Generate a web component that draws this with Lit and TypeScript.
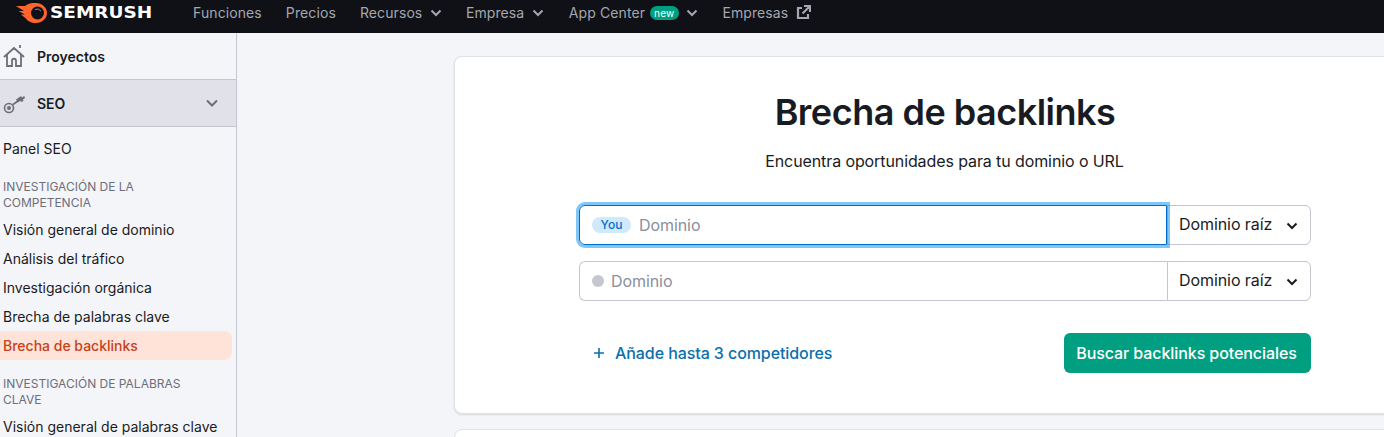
import { LitElement, html, css } from "lit";
import { customElement } from "lit/decorators.js";

const chev = (c: string) => html`<svg class="chev" width="12" height="8" viewBox="0 0 12 8" fill="none"><path d="M1.500 1.500 6 6l4.500-4.500" stroke=${c} stroke-width="2" /></svg>`;

@customElement("app-root")
export class AppRoot extends LitElement {
  static styles = css`
    :host { display: block; width: 1384px; height: 437px; overflow: hidden; background: #f4f5f9; font-family: Inter, "Liberation Sans", sans-serif; color: #191b23; }
    .top { height: 33px; background: #101116; display: flex; align-items: center; padding-bottom: 8px; box-sizing: border-box; color: #a4a6b0; font-size: 14px; letter-spacing: .1px; }
    .logo { display: flex; align-items: center; width: 193px; padding-left: 16px; box-sizing: border-box; gap: 2px; flex: none; }
    .logotext { display: inline-block; font-family: "DejaVu Sans", sans-serif; font-weight: 700; font-size: 15.5px; color: #fff; letter-spacing: 0; transform: scaleX(1.19); transform-origin: left center; }
    .nav { display: flex; align-items: center; gap: 24px; }
    .nav span.i { display: flex; align-items: center; gap: 7.5px; }
    .nav span.app { margin-left: 1px; }
    .new { background: #009f81; color: #fff; font-size: 10px; line-height: 14px; border-radius: 7px; padding: 0 4.5px; height: 14px; margin-left: -3px; letter-spacing: .2px; }
    .body { display: flex; height: 404px; }
    .side { width: 237px; flex: none; border-right: 1px solid #c4c7cf; box-sizing: border-box; overflow: hidden; }
    .h1 { display: flex; align-items: center; height: 47px; border-bottom: 1px solid #c4c7cf; box-sizing: border-box; font-size: 14px; font-weight: 600; padding-left: 37px; position: relative; }
    .h1 svg.ic { position: absolute; left: 3px; top: 10px; }
    .h1.seo { background: #e0e1e9; height: 47px; justify-content: space-between; padding-right: 18px; }
    .items { padding-top: 7px; padding-right: 4px; font-size: 14px; line-height: 29px; }
    .it { padding-left: 3px; height: 29px; color: #191b23; white-space: nowrap; }
    .it.first { margin-bottom: 16px; }
    .it.sel { background: #ffe3d8; color: #c4421c; border-radius: 0 8px 8px 0; font-weight: 500; }
    .cap { padding-left: 3px; padding-right: 30px; font-size: 12px; line-height: 16px; color: #6c6e79; margin-bottom: 4px; }
    .cap.second { margin-top: 16px; }
    .main { flex: 1; padding: 23px 0 0 217px; overflow: hidden; }
    .card { width: 982px; height: 358px; box-sizing: border-box; background: #fff; border-radius: 8px; border: 1px solid #e0e1e9; box-shadow: 0 1px 2px rgba(25,27,35,.12); display: flex; flex-direction: column; align-items: center; }
    .card2 { width: 982px; height: 30px; background: #fff; border-radius: 8px; border: 1px solid #e0e1e9; margin-top: 15px; box-sizing: border-box; }
    h1 { margin: 33px 0 0; font-size: 36px; line-height: 44px; font-weight: 600; letter-spacing: -.5px; }
    .sub { font-size: 16px; line-height: 24px; margin-top: 15px; letter-spacing: -.1px; margin-left: -1px; }
    .form { width: 732px; margin-top: 32px; letter-spacing: -.08px; }
    .row { display: flex; height: 40px; margin-bottom: 16px; font-size: 16px; }
    .inp { flex: 1; display: flex; align-items: center; border: 1px solid #c4c7cf; border-right: none; border-radius: 6px 0 0 6px; box-sizing: border-box; padding-left: 12px; color: #8a8e9b; gap: 8px; }
    .inp.focus { border: 1px solid #006dca; box-shadow: 0 0 0 3px rgba(0,143,248,.5); position: relative; z-index: 1; border-radius: 6px 0 0 6px; }
    .dot { width: 12px; height: 12px; border-radius: 50%; background: #c4c7cf; margin-right: -1px; }
    .you { background: #d0e9fc; color: #006dca; font-size: 12px; line-height: 16px; border-radius: 8px; height: 16px; width: 39px; text-align: center; font-weight: 500; letter-spacing: 0; }
    .sel-box { width: 144px; flex: none; border: 1px solid #c4c7cf; border-radius: 0 6px 6px 0; box-sizing: border-box; display: flex; align-items: center; justify-content: space-between; padding: 0 12px 2px 11px; color: #191b23; }
    .sel-box .chev { margin-top: 4px; }
    .actions { display: flex; justify-content: space-between; align-items: center; margin-top: 32px; }
    .add { display: flex; align-items: center; color: #0b6fae; font-weight: 500; padding-left: 14px; gap: 10px; font-size: 16px; }
    .btn { background: #009f81; color: #fff; border-radius: 6px; height: 40px; width: 247px; box-sizing: border-box; padding-right: 2px; display: flex; align-items: center; justify-content: center; font-size: 16px; font-weight: 500; }
  `;

  render() {
    return html`
      <div class="top">
        <div class="logo">
          <svg width="32" height="22" viewBox="0 0 32 22">
            <path d="M0 4h9C12 1.500 15.500 1 20 1c6 0 11 4.500 11 10s-5 10-11 10c-5 0-8-1.500-10.500-5C7.500 14.500 6 13.500 5 12.500h4L2.500 9H8z" fill="#ff642d"/>
            <circle cx="21.500" cy="11" r="6.500" fill="#101116"/>
            <path d="M19 7.500a5 5 0 0 1 6 1.500" fill="none" stroke="#8a8e9b" stroke-width="1"/>
          </svg>
          <span class="logotext">SEMRUSH</span>
        </div>
        <div class="nav">
          <span class="i">Funciones</span>
          <span class="i">Precios</span>
          <span class="i">Recursos ${chev("#a4a6b0")}</span>
          <span class="i">Empresa ${chev("#a4a6b0")}</span>
          <span class="i app">App Center <span class="new">new</span> ${chev("#a4a6b0")}</span>
          <span class="i">Empresas
            <svg width="15" height="15" viewBox="0 0 15 15" fill="none" stroke="#a4a6b0" stroke-width="2.200"><path d="M6 3H2v10h10V9M8 1h6v6M14 1 6.500 8.500"/></svg>
          </span>
        </div>
      </div>
      <div class="body">
        <div class="side">
          <div class="h1">
            <svg class="ic" width="24" height="26" viewBox="0 0 24 26" fill="none" stroke="#6c6e79" stroke-width="1.800">
              <path d="M1 14 11 5l10 9M4 12v11h5v-5c0-3 4-3 4 0v5h5V12M17 2v3"/>
            </svg>
            Proyectos
          </div>
          <div class="h1 seo">
            <svg class="ic" width="24" height="26" viewBox="0 0 24 26" fill="none" stroke="#6c6e79" stroke-width="1.600">
              <circle cx="6" cy="18" r="4.500"/><circle cx="6" cy="18" r="1.200" fill="#6c6e79"/>
              <path d="m10 14.500 5-3.500"/>
              <path d="m13 9.500 5-3.500.8 1.500 2.500-1.500.7 2-2 1.500.5 1.500-2.500 1-.7-1.200-2.300 1.700z" fill="#6c6e79" stroke="none"/>
            </svg>
            <span>SEO</span>
            <svg width="12" height="8" viewBox="0 0 12 8" fill="none"><path d="M1 1.500 6 6.500l5-5" stroke="#6c6e79" stroke-width="2"/></svg>
          </div>
          <div class="items">
            <div class="it first">Panel SEO</div>
            <div class="cap">INVESTIGACIÓN DE LA COMPETENCIA</div>
            <div class="it">Visión general de dominio</div>
            <div class="it">Análisis del tráfico</div>
            <div class="it">Investigación orgánica</div>
            <div class="it">Brecha de palabras clave</div>
            <div class="it sel">Brecha de backlinks</div>
            <div class="cap second">INVESTIGACIÓN DE PALABRAS CLAVE</div>
            <div class="it">Visión general de palabras clave</div>
          </div>
        </div>
        <div class="main">
          <div class="card">
            <h1>Brecha de backlinks</h1>
            <div class="sub">Encuentra oportunidades para tu dominio o URL</div>
            <div class="form">
              <div class="row">
                <div class="inp focus"><span class="you">You</span>Dominio</div>
                <div class="sel-box">Dominio raíz ${chev("#191b23")}</div>
              </div>
              <div class="row">
                <div class="inp"><span class="dot"></span>Dominio</div>
                <div class="sel-box">Dominio raíz ${chev("#191b23")}</div>
              </div>
              <div class="actions">
                <div class="add"><svg width="12" height="12" viewBox="0 0 12 12" fill="none" stroke="#0b6fae" stroke-width="1.600"><path d="M6 1v10M1 6h10"/></svg>Añade hasta 3 competidores</div>
                <div class="btn">Buscar backlinks potenciales</div>
              </div>
            </div>
          </div>
          <div class="card2"></div>
        </div>
      </div>
    `;
  }
}
